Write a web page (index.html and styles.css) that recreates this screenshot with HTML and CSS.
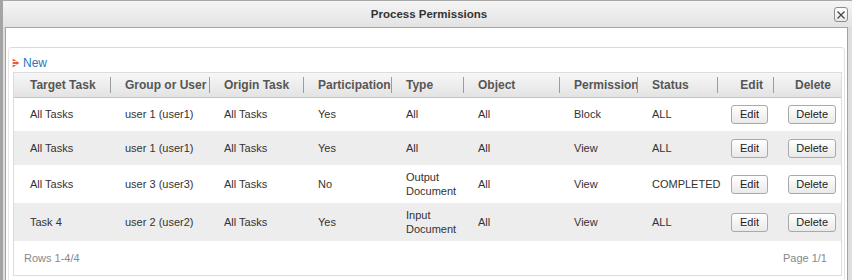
FILE: index.html
```html
<!DOCTYPE html>
<html>
<head>
<meta charset="utf-8">
<link rel="stylesheet" href="styles.css">
</head>
<body>
<div class="window">
  <div class="titlebar">
    <span class="title">Process Permissions</span>
    <button class="close" aria-label="Close">
      <svg width="10" height="10" viewBox="0 0 10 10"><path d="M1.5 1.5L8.5 8.5M8.5 1.5L1.5 8.5" stroke="#444" stroke-width="1.2" fill="none"/></svg>
    </button>
  </div>
  <div class="content">
    <div class="panel">
      <div class="toolbar">
        <a class="new" href="#">
          <svg class="new-icon" width="8" height="10" viewBox="0 0 7 9"><path d="M0.5 0.5L6.5 4.5L0.5 8.5Z" fill="#e4582a"/><path d="M0 3.2H4M0 5.8H4" stroke="#fff" stroke-width="0.9"/></svg>New</a>
      </div>
      <div class="grid">
        <table>
          <colgroup>
            <col class="w-target"><col class="w-group"><col class="w-origin"><col class="w-part"><col class="w-type"><col class="w-object"><col class="w-perm"><col class="w-status"><col class="w-edit"><col class="w-delete">
          </colgroup>
          <thead>
            <tr>
              <th class="first">Target Task</th>
              <th>Group or User</th>
              <th>Origin Task</th>
              <th>Participation</th>
              <th>Type</th>
              <th>Object</th>
              <th>Permission</th>
              <th>Status</th>
              <th class="act">Edit</th>
              <th class="act">Delete</th>
            </tr>
          </thead>
          <tbody>
            <tr>
              <td class="first">All Tasks</td><td>user 1 (user1)</td><td>All Tasks</td><td>Yes</td><td>All</td><td>All</td><td>Block</td><td>ALL</td>
              <td class="act"><button class="btn btn-edit">Edit</button></td><td class="act"><button class="btn">Delete</button></td>
            </tr>
            <tr>
              <td class="first">All Tasks</td><td>user 1 (user1)</td><td>All Tasks</td><td>Yes</td><td>All</td><td>All</td><td>View</td><td>ALL</td>
              <td class="act"><button class="btn btn-edit">Edit</button></td><td class="act"><button class="btn">Delete</button></td>
            </tr>
            <tr>
              <td class="first">All Tasks</td><td>user 3 (user3)</td><td>All Tasks</td><td>No</td><td>Output<br>Document</td><td>All</td><td>View</td><td>COMPLETED</td>
              <td class="act"><button class="btn btn-edit">Edit</button></td><td class="act"><button class="btn">Delete</button></td>
            </tr>
            <tr>
              <td class="first">Task 4</td><td>user 2 (user2)</td><td>All Tasks</td><td>Yes</td><td>Input<br>Document</td><td>All</td><td>View</td><td>ALL</td>
              <td class="act"><button class="btn btn-edit">Edit</button></td><td class="act"><button class="btn">Delete</button></td>
            </tr>
          </tbody>
        </table>
        <div class="footer">
          <span>Rows 1-4/4</span>
          <span>Page 1/1</span>
        </div>
      </div>
    </div>
  </div>
</div>
</body>
</html>
```

FILE: styles.css
```css
* { box-sizing: border-box; }

html, body {
  margin: 0;
  padding: 0;
  background: #ffffff;
}

body {
  font-family: "Liberation Sans", Arial, sans-serif;
  font-size: 11px;
  color: #333;
}

.window {
  width: 852px;
  height: 280px;
  display: flex;
  flex-direction: column;
  background: #dedede;
  border-top: 1px solid #a9a9a9;
  border-left: 3px solid #a4a4a4;
  overflow: hidden;
}

.titlebar {
  height: 26px;
  flex: none;
  display: grid;
  grid-template-columns: 1fr auto 1fr;
  align-items: center;
  padding: 0 4px 0 7px;
  background: linear-gradient(#f5f5f5, #e3e3e3);
}

.title {
  grid-column: 2;
  font-weight: bold;
  font-size: 11.5px;
  color: #333;
}

.close {
  grid-column: 3;
  justify-self: end;
  width: 14px;
  height: 15px;
  margin-top: 1px;
  padding: 0;
  display: flex;
  align-items: center;
  justify-content: center;
  border: 1px solid #8c8c8c;
  border-radius: 3px;
  background: linear-gradient(#ffffff, #e8e8e8);
}

.content {
  flex: 1;
  margin: 0 4px 0 2px;
  padding: 19px 2px 0 2px;
  background: #fff;
  border: 1px solid #a3a3a3;
  border-bottom: none;
}

.panel {
  height: 100%;
  border: 1px solid #dadada;
  border-bottom: none;
  border-left-color: #e6e6e6;
  border-right-color: #e2e2e2;
  border-radius: 4px 4px 0 0;
  padding: 0 2px 0 4px;
}

.toolbar {
  height: 24px;
  display: flex;
  align-items: flex-end;
  padding-bottom: 2px;
  margin-left: -1px;
}

.new {
  display: flex;
  align-items: center;
  gap: 3px;
  color: #2679b8;
  text-decoration: none;
  font-size: 12px;
  line-height: 14px;
}

.grid {
  border: 1px solid #dcdcdc;
}

table {
  width: 827px;
  table-layout: fixed;
  border-collapse: collapse;
  border-spacing: 0;
}

.w-target { width: 96px; }
.w-group { width: 99px; }
.w-origin { width: 94px; }
.w-part { width: 88px; }
.w-type { width: 72px; }
.w-object { width: 96px; }
.w-perm { width: 78px; }
.w-status { width: 80px; }
.w-edit { width: 56px; }
.w-delete { width: 68px; }

th {
  height: 24px;
  padding: 1px 0 0 15px;
  text-align: left;
  font-size: 12px;
  font-weight: bold;
  color: #565656;
  white-space: nowrap;
  overflow: hidden;
  border-bottom: 1px solid #c4c4c4;
  background:
    linear-gradient(#9c9c9c, #9c9c9c) no-repeat 0 55% / 1px 16px,
    linear-gradient(#f7f7f7, #e3e3e3);
}

th.first {
  padding-left: 16px;
  background: linear-gradient(#f7f7f7, #e3e3e3);
}

th.act {
  text-align: right;
  padding: 1px 10px 0 0;
}

td {
  height: 34px;
  padding: 5px 0 5px 15px;
  font-size: 11px;
  line-height: 14px;
  color: #333;
  vertical-align: middle;
  white-space: nowrap;
}

td.first { padding-left: 16px; }

td.act {
  text-align: right;
  padding: 0 5px 0 0;
}

tbody tr:nth-child(even) td { background: #ededed; }

.btn {
  height: 19px;
  padding: 0 7px;
  border: 1px solid #a9a9a9;
  border-radius: 3px;
  background: linear-gradient(#ffffff, #e9e9e9);
  font-family: "Liberation Sans", Arial, sans-serif;
  font-size: 11px;
  color: #222;
  vertical-align: middle;
}

.btn-edit { padding: 0 8px; }

.footer {
  height: 34px;
  display: flex;
  align-items: center;
  justify-content: space-between;
  padding: 0 14px 0 10px;
  font-size: 11px;
  color: #888;
}
```
